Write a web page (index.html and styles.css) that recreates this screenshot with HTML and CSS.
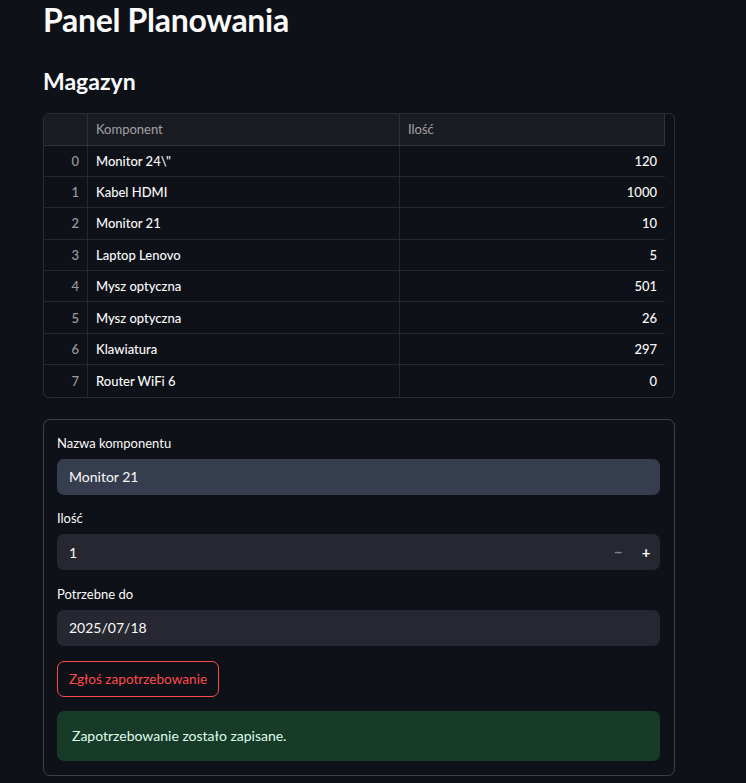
FILE: index.html
```html
<!DOCTYPE html>
<html lang="pl">
<head>
<meta charset="utf-8">
<title>Panel Planowania</title>
<link rel="stylesheet" href="styles.css">
</head>
<body>
<main class="main">
  <h1 class="title">Panel Planowania</h1>
  <h2 class="subtitle">Magazyn</h2>

  <div class="df">
    <div class="df-row df-head">
      <div class="cell idx"></div>
      <div class="cell col">Komponent</div>
      <div class="cell col last">Ilość</div>
    </div>
    <div class="df-row"><div class="cell idx">0</div><div class="cell col">Monitor 24\"</div><div class="cell num">120</div></div>
    <div class="df-row"><div class="cell idx">1</div><div class="cell col">Kabel HDMI</div><div class="cell num">1000</div></div>
    <div class="df-row"><div class="cell idx">2</div><div class="cell col">Monitor 21</div><div class="cell num">10</div></div>
    <div class="df-row"><div class="cell idx">3</div><div class="cell col">Laptop Lenovo</div><div class="cell num">5</div></div>
    <div class="df-row"><div class="cell idx">4</div><div class="cell col">Mysz optyczna</div><div class="cell num">501</div></div>
    <div class="df-row"><div class="cell idx">5</div><div class="cell col">Mysz optyczna</div><div class="cell num">26</div></div>
    <div class="df-row"><div class="cell idx">6</div><div class="cell col">Klawiatura</div><div class="cell num">297</div></div>
    <div class="df-row lastrow"><div class="cell idx">7</div><div class="cell col">Router WiFi 6</div><div class="cell num">0</div></div>
  </div>

  <form class="form">
    <div class="field">
      <label class="label">Nazwa komponentu</label>
      <div class="input focused">Monitor 21</div>
    </div>
    <div class="field">
      <label class="label">Ilość</label>
      <div class="input number">
        <span class="val">1</span>
        <span class="steps"><span class="step minus">−</span><span class="step plus">+</span></span>
      </div>
    </div>
    <div class="field">
      <label class="label">Potrzebne do</label>
      <div class="input">2025/07/18</div>
    </div>
    <div class="btn-row">
      <button type="button" class="btn">Zgłoś zapotrzebowanie</button>
    </div>
    <div class="success">Zapotrzebowanie zostało zapisane.</div>
  </form>
</main>
</body>
</html>
```

FILE: styles.css
```css
* { box-sizing: border-box; }
html, body {
  margin: 0;
  background: #0e1117;
  color: #fafafa;
  font-family: Lato, "Open Sans", sans-serif;
}
.main {
  width: 632px;
  margin-left: 43px;
  display: flex;
  flex-direction: column;
}
.title {
  margin: 0;
  font-size: 32px;
  line-height: 40px;
  font-weight: 700;
  letter-spacing: -0.3px;
}
.subtitle {
  margin: 26px 0 0 0;
  font-size: 23px;
  line-height: 30px;
  font-weight: 700;
}
.df {
  margin-top: 17px;
  border: 1px solid rgba(250,250,250,0.12);
  border-radius: 6px;
  overflow: hidden;
  font-size: 13px;
}
.df-row {
  display: grid;
  grid-template-columns: 44px 312px 265px;
  height: 31.4px;
  font-weight: 500;
}
.df-head {
  height: 31.5px;
  font-weight: 400;
  color: rgba(250,250,250,0.6);
}
.df-head .cell { background: #1a1c24; }
.cell {
  display: flex;
  align-items: center;
  border-bottom: 1px solid rgba(250,250,250,0.1);
  padding: 0 8px;
}
.lastrow .cell { border-bottom: none; }
.idx {
  justify-content: flex-end;
  color: rgba(250,250,250,0.6);
  border-right: 1px solid rgba(250,250,250,0.1);
}
.col { border-right: 1px solid rgba(250,250,250,0.1); }
.df-head .last { border-right: 1px solid rgba(250,250,250,0.1); }
.num { justify-content: flex-end; }

.form {
  margin-top: 21px;
  border: 1px solid rgba(250,250,250,0.2);
  border-radius: 7px;
  padding: 15px 14px 14px 13px;
  display: flex;
  flex-direction: column;
  gap: 15.5px;
}
.field { display: flex; flex-direction: column; }
.label {
  font-size: 13px;
  line-height: 16px;
  margin-bottom: 8px;
}
.input {
  height: 36px;
  border-radius: 7px;
  background: #262730;
  padding: 0 12px;
  display: flex;
  align-items: center;
  font-size: 14px;
}
.input.focused { background: #363d4f; }
.number { justify-content: space-between; padding-right: 0; }
.steps { display: flex; height: 100%; }
.step {
  width: 28px;
  display: flex;
  align-items: center;
  justify-content: center;
  font-size: 15px;
  font-weight: 700;
}
.minus { color: rgba(250,250,250,0.45); }
.plus { color: #fafafa; }
.btn-row { display: flex; margin-top: -0.5px; }
.btn {
  height: 36px;
  padding: 0 11px;
  border: 1px solid #ff4b4b;
  border-radius: 7px;
  background: transparent;
  color: #ff4b4b;
  font-family: inherit;
  font-size: 13.6px;
}
.success {
  margin-top: -1.5px;
  height: 50px;
  border-radius: 7px;
  background: #183a29;
  color: #dffde9;
  display: flex;
  align-items: center;
  padding: 0 15px;
  font-size: 14px;
}
```
